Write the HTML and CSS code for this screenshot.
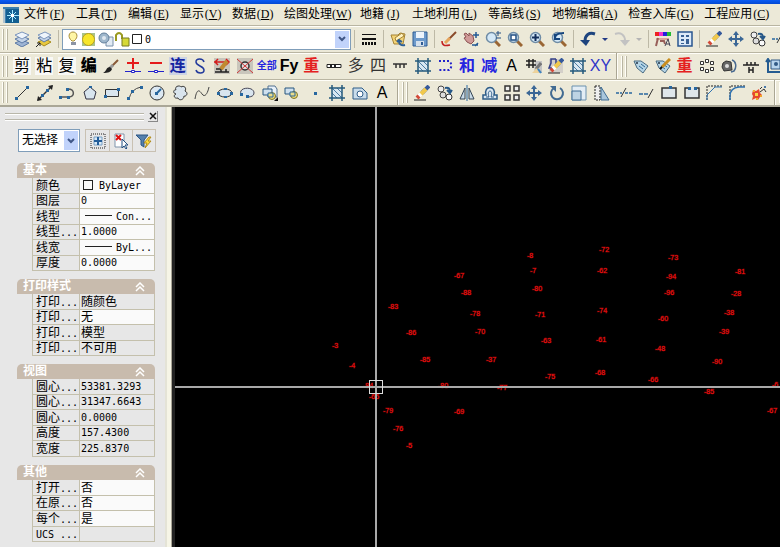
FILE: index.html
```html
<!DOCTYPE html>
<html lang="zh-CN">
<head>
<meta charset="utf-8">
<title>CAD</title>
<link rel="stylesheet" href="styles.css">
</head>
<body>
<svg class="defs" aria-hidden="true">
  <symbol id="layers" viewBox="0 0 16 16"><path d="M1 12l7-3 7 3-7 4z" fill="#9db4d4" stroke="#5d7aa6"/><path d="M1 8l7-3 7 3-7 4z" fill="#c3d3e8" stroke="#5d7aa6"/><path d="M1 4l7-3 7 3-7 4z" fill="#eef4fb" stroke="#7c96bd"/></symbol>
  <symbol id="layerprev" viewBox="0 0 16 16"><path d="M2 11l7-3 6 3-7 4z" fill="#e8c840" stroke="#a58a1c"/><path d="M2 7l7-3 6 3-7 4z" fill="#c3d3e8" stroke="#5d7aa6"/><path d="M2 4l7-3 6 3-7 4z" fill="#eef4fb" stroke="#7c96bd"/><path d="M0 16l4-4M1 12h3v3" stroke="#222" fill="none"/></symbol>
  <symbol id="lweight" viewBox="0 0 16 16"><path d="M1 3.5h14" stroke="#111"/><path d="M1 8h14" stroke="#111" stroke-width="2"/><path d="M1 12.500h14" stroke="#111" stroke-width="3" stroke-dasharray="2 1"/></symbol>
  <symbol id="folder" viewBox="0 0 16 16"><path d="M1 4l3 9h9l2-10-5-1-2 2z" fill="#f2d377" stroke="#a58334"/><path d="M5 7l7-5 2 3-8 5z" fill="#fff3c2" stroke="#a58334"/><path d="M15 14c-4 1-6-1-6-4M7 11l2-2 3 2" stroke="#2d5f95" stroke-width="2" fill="none"/></symbol>
  <symbol id="save" viewBox="0 0 16 16"><path d="M1 1h14v14H1z" fill="#6d9acb" stroke="#2f5c94"/><path d="M4 1h8v6H4z" fill="#edf4fb"/><path d="M4 10h8v5H4z" fill="#d4e0ec"/><path d="M9 11h2v3H9z" fill="#2f5c94"/></symbol>
  <symbol id="brush" viewBox="0 0 16 16"><path d="M15 1L7 9" stroke="#8a4a2a" stroke-width="2"/><path d="M9 7L4 12" stroke="#e6a45b" stroke-width="3"/><path d="M1 10c0 5 3 5 8 4" stroke="#c22020" stroke-width="1.500" fill="none"/></symbol>
  <symbol id="pan" viewBox="0 0 16 16"><path d="M1 3l2-1 3 3V2l4 3 1 5-3 3-4-2-3-4 2-1z" fill="#d09a98" stroke="#8c5353"/><path d="M13 1v6M10 4h6M12 15l3-3M9 14h6" stroke="#245a94" stroke-width="1.500"/></symbol>
  <symbol id="lens" viewBox="0 0 16 16"><path d="M10 10l5 5" stroke="#9a6634" stroke-width="3"/><circle cx="6.500" cy="6.500" r="5" fill="#d4e8f7" stroke="#6f8ca5" stroke-width="1.500"/></symbol>
  <symbol id="zoompm" viewBox="0 0 16 16"><use href="#lens"/><path d="M13 0v5M11 2h5M11 7h5" stroke="#234f83"/></symbol>
  <symbol id="zoomwin" viewBox="0 0 16 16"><use href="#lens"/><path d="M4 4h5v5H4z" fill="#fff" stroke="#234f83" stroke-width="1.500"/></symbol>
  <symbol id="zoomall" viewBox="0 0 16 16"><use href="#lens"/><path d="M6.500 3v7M3 6.500h7" stroke="#132f5c" stroke-width="2"/></symbol>
  <symbol id="zoomprev" viewBox="0 0 16 16"><use href="#lens"/><path d="M4 7c0-4 4-5 9-5M4 3v5h5" fill="none" stroke="#15457e" stroke-width="2"/></symbol>
  <symbol id="undo" viewBox="0 0 16 16"><path d="M15 3C9 1 5 4 5 10" fill="none" stroke="#1d447e" stroke-width="3"/><path d="M0 9h10l-4 6z" fill="#1d447e"/></symbol>
  <symbol id="redo" viewBox="0 0 16 16"><path d="M1 3c6-2 10 1 10 7" fill="none" stroke="#c2c2c2" stroke-width="2"/><path d="M6 9h10l-5 6z" fill="#c2c2c2"/></symbol>
  <symbol id="palette" viewBox="0 0 16 16"><path d="M0 1h4v4H0z" fill="#e22"/><path d="M4 1h4v4H4z" fill="#e3c"/><path d="M8 1h4v4H8z" fill="#22d"/><path d="M12 1h4v4h-4z" fill="#2b3"/><path d="M1 7h13v2H1z" fill="#d8a49c"/><path d="M3 7l-2 8M5 10h4l1 3" stroke="#985f59" stroke-width="2" fill="none"/><path d="M10 15l3-7 2 7M11 13h4" stroke="#445" fill="none"/></symbol>
  <symbol id="props" viewBox="0 0 16 16"><path d="M1 1h14v14H1z" fill="#dceaf8" stroke="#28568f" stroke-width="1.500"/><path d="M4 4h3v2H4zM4 8h3v2H4zM4 12h3v1H4zM9 4h3v2H9zM9 8h3v5H9z" fill="#386194"/></symbol>
  <symbol id="eraser" viewBox="0 0 16 16"><path d="M0 15h12" stroke="#222"/><path d="M15 1L8 8" stroke="#35599b" stroke-width="4"/><path d="M12 4L6 10" stroke="#f1c94d" stroke-width="4"/><path d="M7 9l-2 2" stroke="#fff" stroke-width="4"/><path d="M5 11l-2 2" stroke="#d44a38" stroke-width="4"/></symbol>
  <symbol id="move" viewBox="0 0 16 16"><path d="M8 2v12M2 8h12" stroke="#3b6796" stroke-width="2"/><path d="M8 0l3 4H5zM8 16l3-4H5zM0 8l4-3v6zM16 8l-4-3v6z" fill="#3b6796"/></symbol>
  <symbol id="copy" viewBox="0 0 16 16"><circle cx="4" cy="4" r="3" fill="#eee" stroke="#444"/><circle cx="6" cy="10" r="3" fill="#ddd" stroke="#444"/><circle cx="12" cy="12" r="3" fill="#f8f8f8" stroke="#333"/><path d="M8 3c4-1 5 1 5 4M10 5l3 3 2-3" fill="none" stroke="#265787" stroke-width="2"/></symbol>
  <symbol id="paint" viewBox="0 0 16 16"><path d="M15 2L9 8" stroke="#8a5a38" stroke-width="2"/><path d="M10 7l-3 3" stroke="#999" stroke-width="3"/><path d="M7 9c-4 0-3 4-7 6 5 0 8-1 9-4z" fill="#222"/></symbol>
  <symbol id="plus" viewBox="0 0 16 16"><path d="M8 0v11M2 5h12" stroke="#e51b1b" stroke-width="2"/><path d="M0 13.500h16" stroke="#22c"/><path d="M6.500 12.500h3v2h-3z" fill="#fff" stroke="#22c"/></symbol>
  <symbol id="minus" viewBox="0 0 16 16"><path d="M2 5h12" stroke="#e51b1b" stroke-width="2"/><path d="M0 13.500h16" stroke="#22c"/><path d="M6.500 12.500h3v2h-3z" fill="#fff" stroke="#22c"/></symbol>
  <symbol id="scurve" viewBox="0 0 16 16"><path d="M12 4c-1-4-8-4-8 0s8 4 8 8-7 4-8 0" fill="none" stroke="#223a9c" stroke-width="1.500"/></symbol>
  <symbol id="redit" viewBox="0 0 16 16"><path d="M0 0h16v16H0z" fill="#c9c6bc"/><path d="M1 14h14M2 11h5v3M12 11v3" stroke="#222" fill="none" stroke-width="1.500"/><path d="M0 4h15M4 1L1 4l3 3M12 1l3 3-3 3" fill="none" stroke="#d21e1e" stroke-width="1.500"/><path d="M13 3l-6 8" stroke="#c08a30" stroke-width="4"/></symbol>
  <symbol id="xcircle" viewBox="0 0 16 16"><path d="M0 0h16v16H0z" fill="#c9c6bc"/><circle cx="8" cy="8" r="4" fill="#ddd" stroke="#333" stroke-width="1.500"/><path d="M0 1l16 14M16 1L0 15" stroke="#d03838"/></symbol>
  <symbol id="hline" viewBox="0 0 16 16"><path d="M1 6.500h14v3H1z" fill="#fff" stroke="#222"/><path d="M4 8h8" stroke="#222" stroke-width="2" stroke-dasharray="2"/></symbol>
  <symbol id="comb" viewBox="0 0 16 16"><path d="M1 6h14M4 6v4M8 6v4M12 6v4" stroke="#333" stroke-width="1.500"/></symbol>
  <symbol id="hatch" viewBox="0 0 16 16"><path d="M3 3h10v10H3z" fill="#d8e7f1"/><path d="M3 8l5 5M3 3l10 10M8 3l5 5" stroke="#4b7ba2"/><path d="M3 0v16M13 0v16M0 3h16M0 13h16" stroke="#255a7c" stroke-width="1.500"/></symbol>
  <symbol id="dots" viewBox="0 0 16 16"><path d="M2 3h10c3 2 3 7 0 9H2" fill="none" stroke="#22c" stroke-width="2" stroke-dasharray="2"/></symbol>
  <symbol id="hashbrush" viewBox="0 0 16 16"><path d="M9 3h7v12H8z" fill="#c4c4c4"/><path d="M3 1v9M7 1v9M0 3h10M0 7h10" stroke="#222" stroke-width="1.500"/><path d="M15 5l-5 6" stroke="#777" stroke-width="3"/><path d="M11 10l-5 5h7z" fill="#edd29a"/><path d="M12 11l3 4" stroke="#3b83c0" stroke-width="2"/></symbol>
  <symbol id="polyerase" viewBox="0 0 16 16"><path d="M1 1h14v14H1z" fill="#d3cfc9"/><path d="M8 1H3v4l-2 5h6M8 1v5" stroke="#333f86" stroke-width="1.500" fill="none"/><use href="#eraser"/></symbol>
  <symbol id="tag" viewBox="0 0 16 16"><path d="M1 3l3 7 6 5 5-7-7-5z" fill="#b5d4e6" stroke="#496b82"/><circle cx="4" cy="5" r="1" fill="#234"/><path d="M6 8l4 3M8 6l4 3" stroke="#2e6992"/></symbol>
  <symbol id="tagedit" viewBox="0 0 16 16"><use href="#tag"/><path d="M15 1L7 9" stroke="#c98d1e" stroke-width="3"/><path d="M7 9l-2 2" stroke="#111" stroke-width="2"/></symbol>
  <symbol id="polar" viewBox="0 0 16 16"><path d="M6.500 1.500h3v3h-3zM1.500 3.500h3v3h-3zM11.500 3.500h3v3h-3zM1.500 9.500h3v3h-3zM11.500 9.500h3v3h-3zM6.500 11.500h3v3h-3z" fill="#fff" stroke="#333"/></symbol>
  <symbol id="camera" viewBox="0 0 16 16"><path d="M2 5l3-2 5 1 1 8-8 1-2-4z" fill="#666" stroke="#333"/><circle cx="6" cy="8" r="2" fill="#ddd"/><path d="M11 2c4 1 5 7 2 11l-3 1" fill="none" stroke="#496a90" stroke-width="1.500"/></symbol>
  <symbol id="fence" viewBox="0 0 16 16"><path d="M0 7h16M4 4v3M8 4v3M12 4v3M6 9v6M10 9v6M6 12h4" stroke="#222" stroke-width="1.500"/></symbol>
  <symbol id="axes" viewBox="0 0 16 16"><path d="M3 1v13h13M1 4l2-3 2 3" fill="none" stroke="#245b91" stroke-width="2"/><path d="M6 2h9v9H6z" fill="#b8d5ee" stroke="#315985"/><circle cx="11" cy="6" r="2" fill="#315985"/></symbol>
  <symbol id="line" viewBox="0 0 16 16"><path d="M2 14L14 2" stroke="#333"/><path d="M1 12h3v3H1zM12 1h3v3h-3z" fill="#28679f"/></symbol>
  <symbol id="ray" viewBox="0 0 16 16"><path d="M1 15L15 1" stroke="#333" stroke-width="1.500"/><path d="M0 16l1-5 4 4zM16 0l-1 5-4-4z" fill="#222"/><path d="M4 9h3v3H4zM9 4h3v3H9z" fill="#28679f"/></symbol>
  <symbol id="pline" viewBox="0 0 16 16"><path d="M2 12h8c6 0 6-8-1-8" fill="none" stroke="#555" stroke-width="1.500"/><path d="M0 11h3v3H0zM8 11h3v3H8zM7 3h3v3H7z" fill="#28679f"/></symbol>
  <symbol id="pentagon" viewBox="0 0 16 16"><path d="M8 2l6 5-2 7H4L2 7z" fill="#d9e5ee" stroke="#334"/><path d="M7 1h3v2H7z" fill="#28679f"/></symbol>
  <symbol id="rect" viewBox="0 0 16 16"><path d="M1.500 4.500h13v7h-13z" fill="#d9e5ee" stroke="#333"/><path d="M0 10h3v3H0zM13 3h3v3h-3z" fill="#28679f"/></symbol>
  <symbol id="arc" viewBox="0 0 16 16"><path d="M2 14Q4 4 14 2" fill="none" stroke="#444"/><path d="M0 12h3v3H0zM4 5h3v3H4zM13 1h3v3h-3z" fill="#28679f"/></symbol>
  <symbol id="circle" viewBox="0 0 16 16"><circle cx="8" cy="8" r="7" fill="#dce8f2" stroke="#333"/><path d="M8 8l4-4" stroke="#28679f" stroke-width="2"/><path d="M6 7h3v3H6z" fill="#28679f"/></symbol>
  <symbol id="cloud" viewBox="0 0 16 16"><path d="M4 5c-2-4 4-5 5-3 3-2 6 1 4 4 4 2 1 6-1 5 0 4-5 5-6 2-4 1-5-3-2-4-4-1-2-5 0-4z" fill="#d9e4ed" stroke="#333"/></symbol>
  <symbol id="spline" viewBox="0 0 16 16"><path d="M1 14c2-12 5-8 7-5s5 2 7-7" fill="none" stroke="#444"/></symbol>
  <symbol id="ellipse" viewBox="0 0 16 16"><ellipse cx="8" cy="8" rx="7" ry="4" fill="#d9e5ee" stroke="#333"/><path d="M0 7h3v3H0zM7 3h3v2H7zM7 11h3v2H7zM13 7h3v3h-3z" fill="#28679f"/></symbol>
  <symbol id="earc" viewBox="0 0 16 16"><path d="M2 9C-1 2 15 1 15 8c0 3-3 4-6 4" fill="#d9e5ee" stroke="#445"/><path d="M1 8h3v3H1zM7 10h3v3H7z" fill="#28679f"/></symbol>
  <symbol id="block" viewBox="0 0 16 16"><path d="M1 3h9v6H1z" fill="#cfe0ee" stroke="#28567f"/><circle cx="10" cy="10" r="3.500" fill="#f0dc72" stroke="#7b742d"/><path d="M6 7h5v4H6z" fill="#e9dc8b" stroke="#28679f"/></symbol>
  <symbol id="insert" viewBox="0 0 16 16"><path d="M6 1h7l2 3v8H6z" fill="#e7f0f8" stroke="#53718f"/><use href="#block" y="1"/><path d="M16 12v4h-4z" fill="#111"/></symbol>
  <symbol id="point" viewBox="0 0 16 16"><path d="M7 7h3v3H7z" fill="#28679f"/></symbol>
  <symbol id="region" viewBox="0 0 16 16"><path d="M1 3h9l5 5v6H1z" fill="#c9dceb" stroke="#2f5d88"/><circle cx="8" cy="9" r="3" fill="#fff" stroke="#2f5d88"/></symbol>
  <symbol id="mirror" viewBox="0 0 16 16"><path d="M6 3v11H1zM10 3v11h5z" fill="#c9dbe9" stroke="#345"/><path d="M8 0v16" stroke="#28679f"/></symbol>
  <symbol id="offset" viewBox="0 0 16 16"><path d="M1 14v-4h3C1 0 15 0 12 10h3v4z" fill="#dce8f2" stroke="#2d5c87" stroke-width="1.500"/><path d="M4 12h3C4 4 12 4 9 12h3" fill="none" stroke="#2d5c87"/></symbol>
  <symbol id="array" viewBox="0 0 16 16"><path d="M1 1h5v5H1zM10 1h5v5h-5zM1 10h5v5H1zM10 10h5v5h-5z" fill="#eee" stroke="#333" stroke-width="1.500"/></symbol>
  <symbol id="rotate" viewBox="0 0 16 16"><path d="M5 3a6 6 0 1 0 6 0" fill="none" stroke="#426b92" stroke-width="2"/><path d="M1 1h6v6z" fill="#426b92"/></symbol>
  <symbol id="scale" viewBox="0 0 16 16"><path d="M1 1h14v14H1z" fill="#e3edf5" stroke="#6b91ae"/><path d="M1 6h9v9H1z" fill="#bdd3e3" stroke="#406c93"/></symbol>
  <symbol id="stretch" viewBox="0 0 16 16"><path d="M1 1h5v14H1z" fill="#eee" stroke="#222" stroke-dasharray="2 1"/><path d="M7 2v13h8z" fill="#a9c6dc" stroke="#3e6c94"/></symbol>
  <symbol id="trim" viewBox="0 0 16 16"><path d="M0 8h6M9 8h7" stroke="#28679f" stroke-width="1.500" stroke-dasharray="3 1"/><path d="M5 12l5-9" stroke="#333"/></symbol>
  <symbol id="extend" viewBox="0 0 16 16"><path d="M0 9h10" stroke="#28679f" stroke-width="1.500" stroke-dasharray="4 1"/><path d="M9 13l5-9" stroke="#333"/></symbol>
  <symbol id="breakpt" viewBox="0 0 16 16"><path d="M1 3h14v10H1z" fill="#dfe6ea" stroke="#333" stroke-width="1.500"/><path d="M8 1h3v3H8z" fill="#28679f"/></symbol>
  <symbol id="break" viewBox="0 0 16 16"><path d="M5 3H1v10h14V3h-4" fill="#dfe6ea" stroke="#333" stroke-width="1.500"/><path d="M4 2h3v3H4zM10 2h3v3h-3z" fill="#28679f"/></symbol>
  <symbol id="chamfer" viewBox="0 0 16 16"><path d="M1 15V1h15" fill="none" stroke="#222" stroke-dasharray="2 1"/><path d="M1 15v-5l8-8h7" fill="none" stroke="#2f72b0"/></symbol>
  <symbol id="fillet" viewBox="0 0 16 16"><path d="M1 15V1h15" fill="none" stroke="#222" stroke-dasharray="2 1"/><path d="M1 15v-4q0-8 9-9h6" fill="none" stroke="#2f72b0" stroke-width="1.500"/></symbol>
  <symbol id="explode" viewBox="0 0 16 16"><path d="M2 5l3 1 3-2 1 4 2 2-2 2-2 3-2-2-4 2 1-4-1-2z" fill="#e6462d"/><path d="M4 8h3v3H4z" fill="#f8d34e"/><path d="M2 5h2v2H2zM9 10h2v2H9zM5 13h2v2H5z" fill="#f2a52a"/><path d="M9 7l4-3 2 3M9 4l2-2" stroke="#333" fill="none"/><path d="M13 1h2v2h-2z" fill="#4878a8"/></symbol>
  <symbol id="chev" viewBox="0 0 8 6"><path d="M1 1l3 3 3-3" fill="none" stroke="#3f5686" stroke-width="2"/></symbol>
  <symbol id="fold" viewBox="0 0 10 10"><path d="M1 5l4-4 4 4M1 9l4-4 4 4" fill="none" stroke="#fff" stroke-width="1.500"/></symbol>
</svg>

<div class="titlebar"></div>
<nav class="menu">
  <svg class="logo" viewBox="0 0 16 16"><path d="M0 0h16v16H0z" fill="#3c7fae"/><path d="M3 2h13v14H3z" fill="#135f91"/><path d="M9.500 3v12M4 8.500h12M6 5l7 7M13 5l-7 7" stroke="#a5ebff"/><path d="M8 7h3v3H8z" fill="#fff"/><path d="M0 2h2v14H0z" fill="#b1c3cd"/></svg>
  <a href="#">文件<span>(<u>F</u>)</span></a><a href="#">工具<span>(<u>T</u>)</span></a><a href="#">编辑<span>(<u>E</u>)</span></a><a href="#">显示<span>(<u>V</u>)</span></a><a href="#">数据<span>(<u>D</u>)</span></a><a href="#">绘图处理<span>(<u>W</u>)</span></a><a href="#">地籍<span>(<u>J</u>)</span></a><a href="#">土地利用<span>(<u>L</u>)</span></a><a href="#">等高线<span>(<u>S</u>)</span></a><a href="#">地物编辑<span>(<u>A</u>)</span></a><a href="#">检查入库<span>(<u>G</u>)</span></a><a href="#">工程应用<span>(<u>C</u>)</span></a>
</nav>

<div class="bar">
  <i class="grip"></i>
  <button aria-label="图层特性"><svg><use href="#layers"/></svg></button><button aria-label="上一个图层"><svg><use href="#layerprev"/></svg></button>
  <i class="sep"></i>
  <div class="combo layer">
    <svg class="states" viewBox="0 0 78 16">
      <path d="M5 10c-5-4-3-9 1-9s6 5 1 9z" fill="#fff6a5" stroke="#a98f3a"/><path d="M4 11h5v3H4z" fill="#8c94a4"/>
      <path d="M15 2h13v13H15z" fill="#a9c48c"/><circle cx="21.500" cy="8.500" r="6" fill="#f7e62b" stroke="#b99f22"/>
      <path d="M39 6h7v9h-7z" fill="#e2ebf4" stroke="#7990aa"/><circle cx="37" cy="7" r="5" fill="#9fb7cc" stroke="#637f9b"/><circle cx="37" cy="7" r="2" fill="#e0e8f0"/>
      <path d="M49 10V4q3-4 6 0v4" fill="none" stroke="#9a9a20" stroke-width="2"/><path d="M55 7h7v8h-7z" fill="#d6d936" stroke="#777a22"/>
      <path d="M65.500 3.500h9v9h-9z" fill="#fff" stroke="#222"/>
    </svg>
    <select aria-label="当前图层"><option>0</option></select><span class="drop"><svg><use href="#chev"/></svg></span>
  </div>
  <i class="sep"></i>
  <button aria-label="线宽"><svg><use href="#lweight"/></svg></button>
  <i class="sep"></i>
  <button aria-label="打开"><svg><use href="#folder"/></svg></button><button aria-label="保存"><svg><use href="#save"/></svg></button>
  <i class="sep"></i>
  <button aria-label="重画"><svg><use href="#brush"/></svg></button><button aria-label="平移"><svg><use href="#pan"/></svg></button><button aria-label="实时缩放"><svg><use href="#zoompm"/></svg></button><button aria-label="窗口缩放"><svg><use href="#zoomwin"/></svg></button><button aria-label="全图"><svg><use href="#zoomall"/></svg></button><button aria-label="前一视图"><svg><use href="#zoomprev"/></svg></button>
  <i class="sep"></i>
  <button aria-label="放弃"><svg><use href="#undo"/></svg></button><button class="more" aria-label="放弃列表"></button><button aria-label="重做"><svg><use href="#redo"/></svg></button><button class="more off" aria-label="重做列表"></button>
  <i class="sep"></i>
  <button aria-label="特性"><svg><use href="#palette"/></svg></button><button aria-label="设计中心"><svg><use href="#props"/></svg></button>
  <i class="sep"></i>
  <button aria-label="删除"><svg><use href="#eraser"/></svg></button><button aria-label="移动"><svg><use href="#move"/></svg></button><button aria-label="复制"><svg><use href="#copy"/></svg></button><button aria-label="修剪"><svg><use href="#trim"/></svg></button>
</div>

<div class="bar">
  <i class="grip"></i>
  <div class="tools survey">
    <button class="tile">剪</button><button class="tile">粘</button><button class="tile">复</button><button class="heavy">编</button><button aria-label="刷"><svg><use href="#paint"/></svg></button><button aria-label="加点"><svg><use href="#plus"/></svg></button><button aria-label="减点"><svg><use href="#minus"/></svg></button><button class="navy">连</button><button aria-label="曲线"><svg><use href="#scurve"/></svg></button><button aria-label="修改"><svg><use href="#redit"/></svg></button><button aria-label="去除"><svg><use href="#xcircle"/></svg></button><button class="pair">全部</button><button class="heavy latin">Fy</button><button class="red">重</button><button aria-label="墙"><svg><use href="#hline"/></svg></button><button class="gray">多</button><button class="gray">四</button><button aria-label="坎"><svg><use href="#comb"/></svg></button><button aria-label="填充"><svg><use href="#hatch"/></svg></button><button aria-label="虚线"><svg><use href="#dots"/></svg></button><button class="blue">和</button><button class="blue">减</button><button class="latin">A</button><button aria-label="格网刷"><svg><use href="#hashbrush"/></svg></button><button aria-label="边界删除"><svg><use href="#polyerase"/></svg></button><button aria-label="图案"><svg><use href="#hatch"/></svg></button><button class="xy">XY</button>
  </div>
  <i class="end"></i><i class="grip"></i>
  <div class="tools rest">
    <button aria-label="标签"><svg><use href="#tag"/></svg></button><button aria-label="编辑标签"><svg><use href="#tagedit"/></svg></button><button class="red">重</button><button aria-label="阵列点"><svg><use href="#polar"/></svg></button><button aria-label="视图"><svg><use href="#camera"/></svg></button><button aria-label="栅栏"><svg><use href="#fence"/></svg></button><button aria-label="坐标"><svg><use href="#axes"/></svg></button>
  </div>
</div>

<div class="bar last">
  <i class="grip"></i>
  <div class="tools draw">
    <button aria-label="直线"><svg><use href="#line"/></svg></button><button aria-label="构造线"><svg><use href="#ray"/></svg></button><button aria-label="多段线"><svg><use href="#pline"/></svg></button><button aria-label="正多边形"><svg><use href="#pentagon"/></svg></button><button aria-label="矩形"><svg><use href="#rect"/></svg></button><button aria-label="圆弧"><svg><use href="#arc"/></svg></button><button aria-label="圆"><svg><use href="#circle"/></svg></button><button aria-label="修订云线"><svg><use href="#cloud"/></svg></button><button aria-label="样条曲线"><svg><use href="#spline"/></svg></button><button aria-label="椭圆"><svg><use href="#ellipse"/></svg></button><button aria-label="椭圆弧"><svg><use href="#earc"/></svg></button><button aria-label="插入块"><svg><use href="#insert"/></svg></button><button aria-label="创建块"><svg><use href="#block"/></svg></button><button aria-label="点"><svg><use href="#point"/></svg></button><button aria-label="图案填充"><svg><use href="#hatch"/></svg></button><button aria-label="面域"><svg><use href="#region"/></svg></button><button class="latin">A</button>
  </div>
  <i class="end"></i><i class="grip"></i>
  <div class="tools modify">
    <button aria-label="删除"><svg><use href="#eraser"/></svg></button><button aria-label="复制"><svg><use href="#copy"/></svg></button><button aria-label="镜像"><svg><use href="#mirror"/></svg></button><button aria-label="偏移"><svg><use href="#offset"/></svg></button><button aria-label="阵列"><svg><use href="#array"/></svg></button><button aria-label="移动"><svg><use href="#move"/></svg></button><button aria-label="旋转"><svg><use href="#rotate"/></svg></button><button aria-label="缩放"><svg><use href="#scale"/></svg></button><button aria-label="拉伸"><svg><use href="#stretch"/></svg></button><button aria-label="修剪"><svg><use href="#trim"/></svg></button><button aria-label="延伸"><svg><use href="#extend"/></svg></button><button aria-label="打断于点"><svg><use href="#breakpt"/></svg></button><button aria-label="打断"><svg><use href="#break"/></svg></button><button aria-label="倒角"><svg><use href="#chamfer"/></svg></button><button aria-label="圆角"><svg><use href="#fillet"/></svg></button><button aria-label="分解"><svg><use href="#explode"/></svg></button>
  </div>
  <i class="end"></i><i class="grip"></i>
</div>

<main>
  <aside>
    <div class="handle"><i></i><button aria-label="关闭"><svg viewBox="0 0 8 8"><path d="M1 1l6 6M7 1L1 7" stroke="#111" stroke-width="1.500"/></svg></button></div>
    <div class="pick">
      <div class="combo"><select aria-label="选择"><option>无选择</option></select><span class="drop"><svg><use href="#chev"/></svg></span></div>
      <div class="picks">
        <button aria-label="切换"><svg viewBox="0 0 16 16"><path d="M1 1h14v14H1z" fill="none" stroke="#222" stroke-dasharray="1"/><path d="M4 4h8v8H4z" fill="#d8e9f7" stroke="#7aa2c6"/><path d="M8 4v8M4 8h8" stroke="#245e9a" stroke-width="2"/></svg></button>
        <button aria-label="选择对象"><svg viewBox="0 0 16 16"><path d="M2 1h9v13H2z" fill="#fff" stroke="#7e93aa"/><path d="M3 2l5 5M8 2L3 7" stroke="#d11" stroke-width="2"/><path d="M9 6v9l2-2 2 3 1-1-2-3h3z" fill="#fff" stroke="#234f80"/></svg></button>
        <button aria-label="快速选择"><svg viewBox="0 0 16 16"><path d="M0 2h12L8 7v7l-3-2V7z" fill="#5580ad" stroke="#2b5583"/><path d="M13 4L8 10h3l-2 5 6-7h-3l3-4z" fill="#ffdc3a" stroke="#b08b1c"/></svg></button>
      </div>
    </div>
    <section><h2>基本<svg><use href="#fold"/></svg></h2>
      <table>
        <tr><th>颜色</th><td class="num"><i class="swatch"></i>ByLayer</td></tr>
        <tr><th>图层</th><td class="num">0</td></tr>
        <tr><th>线型</th><td class="num"><i class="rule"></i>Con...</td></tr>
        <tr><th>线型<small>...</small></th><td class="num">1.0000</td></tr>
        <tr><th>线宽</th><td class="num"><i class="rule"></i>ByL...</td></tr>
        <tr><th>厚度</th><td class="num">0.0000</td></tr>
      </table></section>
    <section><h2>打印样式<svg><use href="#fold"/></svg></h2>
      <table>
        <tr class="ro"><th>打印<small>...</small></th><td>随颜色</td></tr>
        <tr><th>打印<small>...</small></th><td>无</td></tr>
        <tr class="ro"><th>打印<small>...</small></th><td>模型</td></tr>
        <tr class="ro"><th>打印<small>...</small></th><td>不可用</td></tr>
      </table></section>
    <section><h2>视图<svg><use href="#fold"/></svg></h2>
      <table>
        <tr class="ro"><th>圆心<small>...</small></th><td class="num">53381.3293</td></tr>
        <tr class="ro"><th>圆心<small>...</small></th><td class="num">31347.6643</td></tr>
        <tr class="ro"><th>圆心<small>...</small></th><td class="num">0.0000</td></tr>
        <tr class="ro"><th>高度</th><td class="num">157.4300</td></tr>
        <tr class="ro"><th>宽度</th><td class="num">225.8370</td></tr>
      </table></section>
    <section><h2>其他<svg><use href="#fold"/></svg></h2>
      <table>
        <tr><th>打开<small>...</small></th><td>否</td></tr>
        <tr><th>在原<small>...</small></th><td>否</td></tr>
        <tr><th>每个<small>...</small></th><td>是</td></tr>
        <tr class="ro"><th><small>UCS ...</small></th><td></td></tr>
      </table></section>
  </aside>
  <div class="canvas">
    <b style="left:352px;top:145px">-8</b><b style="left:424px;top:139px">-72</b><b style="left:493px;top:147px">-73</b>
    <b style="left:279px;top:165px">-67</b><b style="left:355px;top:160px">-7</b><b style="left:422px;top:160px">-62</b><b style="left:491px;top:166px">-94</b><b style="left:560px;top:161px">-81</b>
    <b style="left:286px;top:182px">-88</b><b style="left:357px;top:178px">-80</b><b style="left:489px;top:182px">-96</b><b style="left:556px;top:183px">-28</b>
    <b style="left:213px;top:196px">-83</b><b style="left:295px;top:203px">-78</b><b style="left:360px;top:204px">-71</b><b style="left:422px;top:200px">-74</b><b style="left:483px;top:208px">-60</b><b style="left:549px;top:202px">-38</b>
    <b style="left:231px;top:222px">-86</b><b style="left:300px;top:221px">-70</b><b style="left:366px;top:230px">-63</b><b style="left:421px;top:229px">-61</b><b style="left:544px;top:221px">-39</b>
    <b style="left:157px;top:235px">-3</b><b style="left:174px;top:255px">-4</b><b style="left:245px;top:249px">-85</b><b style="left:311px;top:249px">-37</b><b style="left:480px;top:238px">-48</b><b style="left:537px;top:251px">-90</b>
    <b style="left:370px;top:266px">-75</b><b style="left:420px;top:262px">-68</b><b style="left:473px;top:269px">-66</b>
    <b style="left:188px;top:275px">-84</b><b style="left:263px;top:275px">-80</b><b style="left:322px;top:277px">-77</b><b style="left:529px;top:281px">-85</b><b style="left:597px;top:274px">-6</b>
    <b style="left:194px;top:286px">-65</b><b style="left:208px;top:300px">-79</b><b style="left:279px;top:301px">-69</b><b style="left:592px;top:300px">-67</b>
    <b style="left:218px;top:318px">-76</b><b style="left:231px;top:335px">-5</b>
    <i class="vline"></i><i class="hline"></i><i class="box"></i>
  </div>
</main>
</body>
</html>
```

FILE: styles.css
```css
* { box-sizing: border-box; }

body {
  margin: 0;
  height: 100vh;
  display: flex;
  flex-direction: column;
  overflow: hidden;
  background: #ece9d8;
  color: #000;
  font: 12px/15px "DejaVu Sans Mono", "Noto Sans CJK SC", sans-serif;
}

.defs { position: absolute; width: 0; height: 0; }

button {
  margin: 0;
  padding: 0;
  border: 0;
  background: none;
  color: inherit;
  font: inherit;
}

.titlebar { flex: none; height: 4px; background: linear-gradient(#0a5cf5, #0348d2); }

.menu {
  flex: none;
  display: flex;
  align-items: center;
  gap: 10px;
  height: 21px;
  padding: 0 0 0 3px;
  font-family: "Liberation Serif", "Noto Sans CJK SC", serif;
  white-space: nowrap;
}
.logo { width: 16px; height: 16px; margin-right: -5px; }
.menu a { color: #000; text-decoration: none; }
.menu span { display: inline-block; width: 18px; text-align: center; }

.bar {
  flex: none;
  display: flex;
  align-items: center;
  height: 27px;
  border-top: 1px solid #b9b5a2;
  box-shadow: inset 0 1px #fffef8;
  overflow: hidden;
}
.bar.last { height: 28px; border-bottom: 2px solid #aaa797; }
.bar button { flex: none; display: grid; place-items: center; width: 22px; height: 22px; }
.bar button svg { width: 16px; height: 16px; }

.grip {
  flex: none;
  width: 7px;
  height: 21px;
  margin: 0 2px;
  background: linear-gradient(90deg, #fffef8 1px, #b9b5a2 1px 2px, #ece9d8 2px 4px, #fffef8 4px 5px, #b9b5a2 5px 6px, #ece9d8 6px);
}
.sep { flex: none; width: 1px; height: 18px; margin: 0 3px; background: #bdb9a6; }
.end { flex: none; width: 2px; height: 26px; margin: 0 1px 0 4px; border-left: 1px solid #aaa693; background: #fffef8; }

.tools { display: flex; flex: none; justify-content: space-between; }
.survey { width: 77%; }
.rest { flex: 1; justify-content: flex-start; }
.draw { width: 49%; }
.modify { width: 46%; }

.tools button { font-size: 16px; line-height: 18px; }
.tools .tile { background: #f8f8f6 content-box; padding: 2px; }
.tools .heavy { font-weight: 900; }
.tools .navy { color: #1424a0; font-weight: 700; background: #cdd3e4 content-box; padding: 2px; }
.tools .blue { color: #2424e0; font-weight: 700; }
.tools .pair { color: #2424e0; font-size: 10px; font-weight: 700; }
.tools .red { color: #e42020; font-weight: 700; }
.tools .gray { color: #333; }
.tools .latin { font-family: "Liberation Sans", sans-serif; }
.tools .xy { color: #2f36c8; font-family: "Liberation Sans", sans-serif; }

.bar .more { width: 12px; }
.more::before { content: ""; border: 3px solid transparent; border-top-color: #223a86; border-bottom: 0; }
.more.off::before { border-top-color: #b4b4b4; }

.combo {
  display: flex;
  align-items: center;
  height: 23px;
  border: 1px solid #7f9db9;
  background: #fff;
}
.combo select {
  flex: 1;
  min-width: 0;
  height: 100%;
  padding: 0 3px;
  border: 0;
  appearance: none;
  background: none;
  color: #000;
  font: inherit;
}
.drop {
  flex: none;
  display: grid;
  place-items: center;
  width: 14px;
  align-self: stretch;
  margin: 1px;
  background: #c1d3fb;
}
.drop svg { width: 8px; height: 6px; }
.layer { flex: none; width: 37%; height: 21px; }
.combo.layer select { padding: 0; font-size: 10px; }
.states { flex: none; width: 78px; height: 16px; margin-left: 4px; }

main { flex: 1; min-height: 0; display: flex; }

aside {
  flex: none;
  width: 175px;
  padding: 4px 20px 0 5px;
  border-right: 3px solid #222;
  background: linear-gradient(90deg, #e7e7e7 165px, #e4e3d6 165px 167px, #f6f5e6 167px 171px, #aaa697 171px);
  overflow: hidden;
}
.handle { display: flex; align-items: center; gap: 4px; margin-right: -6px; }
.handle i { flex: 1; height: 7px; border: solid #b9b7aa; border-width: 1px 0; box-shadow: inset 0 1px #fff, 0 1px #fff; }
.handle button { display: grid; place-items: center; width: 10px; height: 11px; border: solid #888; border-width: 0 1px 1px 0; }
.handle svg { width: 8px; height: 8px; }

.pick { display: flex; justify-content: space-between; margin: 7px 0 11px 13px; }
.pick .combo { width: 62px; margin-right: 5px; flex: none; }
.picks { display: flex; margin-right: -3px; border: 1px solid #c9c1b3; }
.picks button { display: grid; place-items: center; width: 23px; height: 21px; border-left: 1px solid #c9c1b3; }
.picks button:first-child { border-left: 0; }
.picks svg { width: 16px; height: 16px; }

section { margin: 0 -3px 8px 12px; }
h2 {
  display: flex;
  align-items: center;
  justify-content: space-between;
  height: 15px;
  margin: 0;
  padding: 0 10px 0 6px;
  border-radius: 5px 5px 0 0;
  background: #c8bbad;
  color: #fff;
  font-size: 12px;
  line-height: 15px;
}
h2 svg { width: 10px; height: 10px; }

table { width: calc(100% - 15px); margin-left: 15px; border-spacing: 0; table-layout: fixed; border-left: 1px solid #c4c0ac; }
tr { height: 15px; }
tr:nth-child(odd) { height: 16px; }
th, td {
  padding: 0 0 0 3px;
  border: solid #c4c0ac;
  border-width: 0 1px 1px 0;
  font-size: 12px;
  font-weight: 400;
  line-height: 12px;
  text-align: left;
  white-space: nowrap;
}
th { width: 47px; }
td { padding-left: 1px; background: #fafafa; }
.num, small { font-size: 10px; line-height: 10px; }
.ro td { background: none; }
.swatch { display: inline-block; width: 10px; height: 10px; margin: 0 6px 0 2px; border: 1px solid #222; vertical-align: -1px; }
.rule { display: inline-block; width: 27px; height: 1px; margin: 0 4px; background: #222; vertical-align: 4px; }

.canvas { position: relative; flex: 1; background: #000; overflow: hidden; }
.canvas b { position: absolute; color: #ff1010; font: 7px/8px "Liberation Sans", sans-serif; -webkit-text-stroke: 1px #ff101055; }
.vline, .box, .canvas .hline { position: absolute; }
.vline { left: 200px; top: 0; bottom: 0; width: 2px; background: #a8a8a8; }
.canvas .hline { left: 0; right: 0; top: 279px; height: 2px; background: #a8a8a8; }
.box { left: 194px; top: 273px; width: 14px; height: 14px; border: 1px solid #ddd; }
```
